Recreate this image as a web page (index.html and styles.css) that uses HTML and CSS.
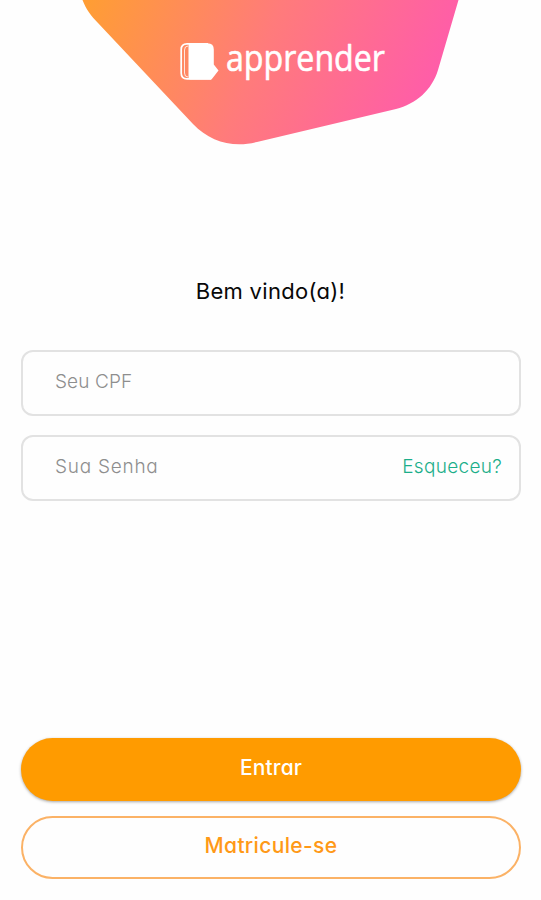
FILE: index.html
```html
<!DOCTYPE html>
<html lang="pt-BR">
<head>
<meta charset="utf-8">
<meta name="viewport" content="width=device-width, initial-scale=1">
<title>apprender</title>
<link rel="stylesheet" href="styles.css">
</head>
<body>
<main class="screen">
  <header class="hero">
    <svg class="hero-art" viewBox="0 0 541 150" role="img" aria-label="apprender">
      <defs>
        <linearGradient id="brand" gradientUnits="userSpaceOnUse" x1="95" y1="-10" x2="420" y2="130">
          <stop offset="0" stop-color="#ff9d35"/>
          <stop offset=".5" stop-color="#ff7b7b"/>
          <stop offset="1" stop-color="#ff5caa"/>
        </linearGradient>
      </defs>
      <path fill="url(#brand)" d="M82.500 0C86 9 91 16 98 23L193 124C210 142 233 148 257 142L396 109C416 104 432 90 438 70L458.500 0Z"/>
      <path fill="#fff" d="M190 43.200H207.500Q213.800 43.200 213.800 49.500V64.500L218.500 70.500L211.500 79.500H190Q188.500 79.500 188.500 77V45.500Q188.500 43.200 190 43.200Z"/>
      <path fill="none" stroke="#fff" stroke-width="1.700" d="M208 43.800H187Q181.200 43.800 181.200 49.500V73Q181.200 78.800 187 78.800H211"/>
      <path fill="none" stroke="#fff" stroke-width=".8" d="M188 46Q184.500 46 184.500 50V73Q184.500 77 188 77"/>
      <text class="wordmark" x="226" y="71" textLength="159" lengthAdjust="spacingAndGlyphs">apprender</text>
    </svg>
  </header>
  <h1 class="welcome">Bem vindo(a)!</h1>
  <form class="login">
    <div class="field"><span class="hint cpf">Seu CPF</span></div>
    <div class="field"><span class="hint senha">Sua Senha</span><a class="forgot">Esqueceu?</a></div>
    <div class="actions">
      <button class="button primary" type="button"><span>Entrar</span></button>
      <button class="button secondary" type="button"><span>Matricule-se</span></button>
    </div>
  </form>
</main>
</body>
</html>
```
FILE: styles.css
```css
* { box-sizing: border-box; }
body {
  margin: 0;
  background: #fefefe;
  font-family: Inter, "Open Sans", sans-serif;
  font-feature-settings: "cv11" 1;
}
.screen { width: 541px; height: 900px; overflow: hidden; }
.hero { height: 150px; }
.hero-art { display: block; width: 541px; height: 150px; }
.wordmark {
  font-family: "Open Sans", "Noto Sans", sans-serif;
  font-size: 37px;
  font-weight: 500;
  fill: #fff;
  stroke: #fff;
  stroke-width: .6px;
  stroke-linejoin: round;
}
.welcome {
  margin: 126px 0 0;
  height: 30px;
  line-height: 30px;
  text-align: center;
  font-size: 22px;
  font-weight: 400;
  letter-spacing: .3px;
  color: #080808;
}
.login { padding: 44px 20px 0 21px; }
.field {
  display: flex;
  align-items: center;
  justify-content: space-between;
  height: 66px;
  margin-bottom: 19px;
  padding: 0 17px 4px 32px;
  border: 2px solid #e2e2e2;
  border-radius: 12px;
  font-size: 19px;
  font-weight: 300;
}
.hint { color: #8e8e8e; }
.senha { letter-spacing: .75px; }
.cpf { letter-spacing: .1px; }
.forgot { color: #1cae8a; letter-spacing: .3px; }
.actions {
  display: flex;
  flex-direction: column;
  gap: 15px;
  padding-top: 218px;
}
.button {
  height: 63px;
  padding: 0 0 3px;
  border-radius: 32px;
  font: 500 21px/30px Inter, "Open Sans", sans-serif;
  font-feature-settings: "cv11" 1;
}
.primary {
  border: 0;
  background: #ff9b00;
  color: #fff;
  box-shadow: 0 1px 3px rgba(0, 0, 0, .35);
  letter-spacing: .15px;
}
.secondary {
  border: 2px solid #fbb266;
  background: transparent;
  color: #ff9917;
  letter-spacing: .35px;
}
```
